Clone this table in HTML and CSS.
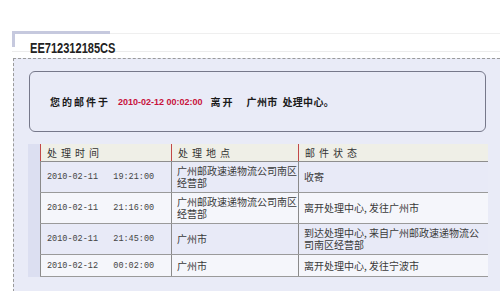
FILE: index.html
```html
<!DOCTYPE html>
<html lang="zh-CN">
<head>
<meta charset="utf-8">
<title>邮件查询</title>
<link rel="stylesheet" href="styles.css">
</head>
<body>
<div class="tabbar">
  <div class="tab"><span class="code">EE712312185CS</span></div>
</div>
<div class="panel">
  <div class="msg">
    <span class="w1">您的邮件于</span><span class="date">2010-02-12 00:02:00</span><span class="w2">离开</span><span class="w3">广州市</span><span class="w3">处理中心。</span>
  </div>
  <div class="tablewrap">
    <div class="strip"></div>
    <table class="track">
      <colgroup><col class="c1"><col class="c2"><col class="c3"></colgroup>
      <thead>
        <tr><th>处理时间</th><th>处理地点</th><th>邮件状态</th></tr>
      </thead>
      <tbody>
        <tr class="odd"><td class="t">2010-02-11   19:21:00</td><td>广州邮政速递物流公司南区经营部</td><td>收寄</td></tr>
        <tr class="even"><td class="t">2010-02-11   21:16:00</td><td>广州邮政速递物流公司南区经营部</td><td>离开处理中心, 发往广州市</td></tr>
        <tr class="odd"><td class="t">2010-02-11   21:45:00</td><td>广州市</td><td>到达处理中心, 来自广州邮政速递物流公司南区经营部</td></tr>
        <tr class="even"><td class="t">2010-02-12   00:02:00</td><td>广州市</td><td>离开处理中心, 发往宁波市</td></tr>
      </tbody>
    </table>
  </div>
</div>
<div class="baseline"></div>
</body>
</html>
```

FILE: styles.css
```css
html, body {
  margin: 0;
  padding: 0;
  background: #ffffff;
  overflow: hidden;
  width: 500px;
  height: 291px;
  font-family: "Noto Sans CJK SC", "Liberation Sans", sans-serif;
}

.tabbar {
  margin: 31px 0 0 12px;
  height: 20px;
  border-bottom: 1px solid #ebebeb;
  background: linear-gradient(#ffffff 2px, #efefef 2px, #efefef 3px, #ffffff 3px);
}

.tab {
  width: 80px;
  height: 13px;
  border-top: 3px solid #c6c9de;
  border-left: 3px solid #c6c9de;
  padding-left: 15px;
  white-space: nowrap;
}

.code {
  display: inline-block;
  font-family: "Liberation Sans", Arial, sans-serif;
  font-weight: bold;
  font-size: 14px;
  line-height: 14px;
  margin-top: 4px;
  color: #222;
  transform: scaleX(0.79);
  transform-origin: left center;
}

.panel {
  margin: 6px 0 0 13px;
  width: 487px;
  box-sizing: border-box;
  border-top: 1px dashed #9a9a9a;
  border-left: 1px dashed #9a9a9a;
  border-bottom: 1px dashed #9a9a9a;
  background: #e9ebf7;
  padding: 12px 0 14px 0;
}

.msg {
  margin-left: 15px;
  width: 457px;
  height: 61px;
  box-sizing: border-box;
  border: 1px solid #76788a;
  border-radius: 6px;
  padding-left: 20px;
  display: flex;
  align-items: center;
  font-size: 10px;
  font-weight: 700;
  color: #1a1a1a;
  white-space: nowrap;
}

.w1 { letter-spacing: 2px; }
.date {
  font-family: "Liberation Sans", Arial, sans-serif;
  font-size: 9px;
  font-weight: bold;
  color: #c8123c;
  margin: 0 8px 0 8px;
}
.w2 { letter-spacing: 2px; margin-right: 12px; }
.w3 { letter-spacing: 0.3px; margin-right: 5px; }

.tablewrap {
  margin: 12px 0 0 14px;
  display: flex;
}

.strip {
  width: 12px;
  background: #dcdff1;
}

.track {
  border-collapse: collapse;
  width: 447px;
  table-layout: fixed;
  font-size: 10px;
  color: #3a3a3a;
}

.c1 { width: 131px; }
.c2 { width: 127px; }
.c3 { width: 189px; }

.track th {
  height: 17px;
  padding: 0 0 0 6px;
  text-align: left;
  font-weight: normal;
  letter-spacing: 4px;
  background: #efefe7;
  border-left: 1px solid #c24848;
  border-bottom: 1px solid #8e8e8e;
  color: #333;
  line-height: 12px;
}

.track td {
  height: 24px;
  padding: 3px 0 3px 5px;
  line-height: 12px;
  border-left: 1px solid #8a8a8a;
  border-bottom: 1px solid #9a9a9a;
  vertical-align: middle;
}

.track tbody tr:last-child td {
  height: 15px;
}

.track td.t {
  font-family: "Liberation Mono", "DejaVu Sans Mono", monospace;
  font-size: 8.5px;
  white-space: pre;
  color: #444;
  padding-left: 6px;
}

.odd td { background: #e8eaf7; }
.even td { background: #f5f6fb; }

.baseline {
  margin-top: 1px;
  height: 2px;
  background: #111;
}
```
